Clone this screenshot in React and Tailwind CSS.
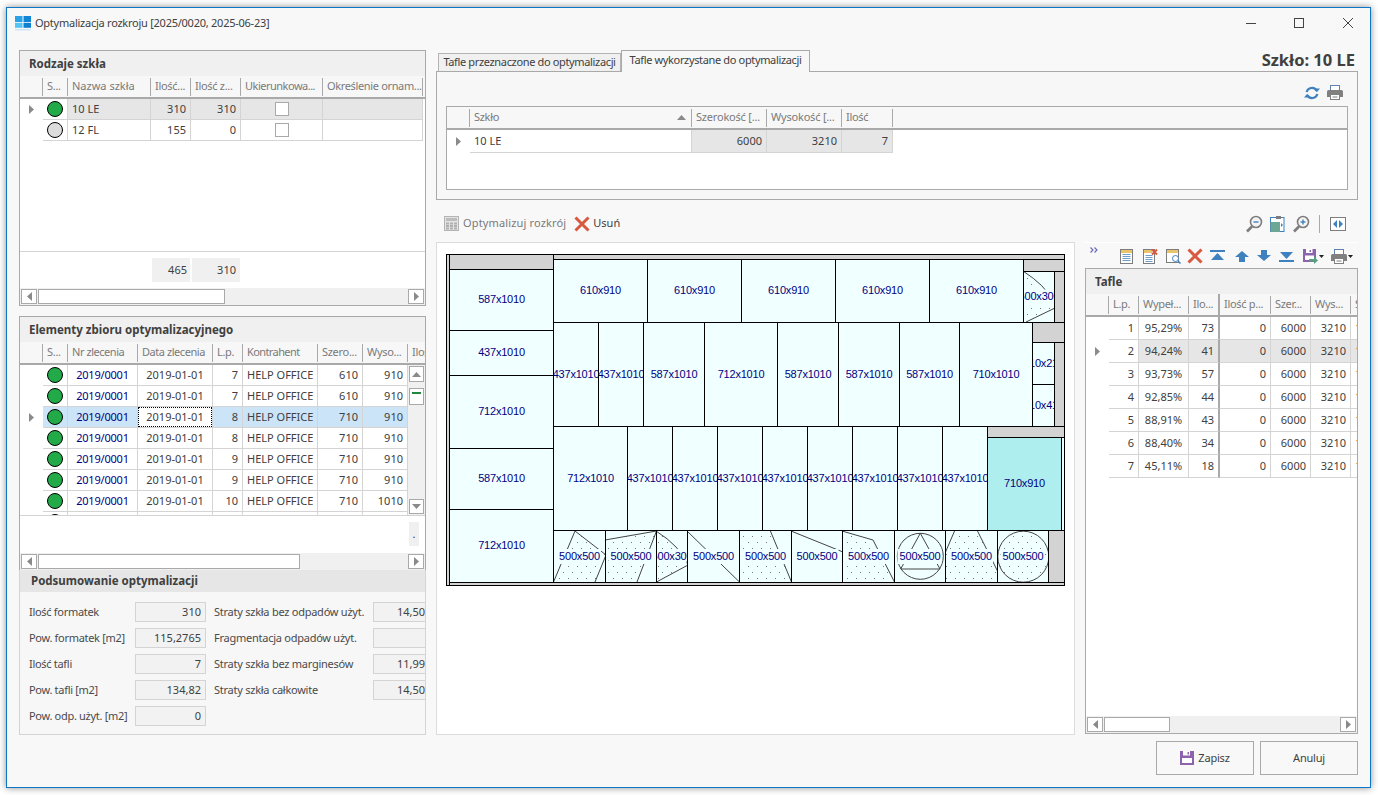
import React from 'react';

const Tri = ({ dir = 'r', c = '#8a8a8a' }) => {
  const d = { r: 'M0 0L5 4.5L0 9z', l: 'M5 0L0 4.5L5 9z', u: 'M0 5L4.5 0L9 5z', d: 'M0 0L4.5 5L9 0z' }[dir];
  const vert = dir === 'u' || dir === 'd';
  return <svg width={vert ? 9 : 5} height={vert ? 5 : 9}><path d={d} fill={c} /></svg>;
};

const Dot = ({ c = '#21aa47' }) => (
  <div className="h-[16px] w-[16px] rounded-full border border-black" style={{ backgroundColor: c }} />
);

const Check = () => <div className="h-[14px] w-[14px] border border-[#a9a9a9] bg-white" />;

const HeaderRow = ({ cols }) => (
  <div className="flex h-[23px] shrink-0 items-center overflow-hidden border-b-2 border-[#a9a9a9] bg-[#f7f7f7] text-[#7a7a7a]">
    {cols.map((c, i) => (
      <div key={i} className={`flex shrink-0 items-center justify-between overflow-hidden whitespace-nowrap pl-[4px] ${c.w} ${c.noSep ? '' : 'border-r border-[#a9a9a9]'} ${c.head || 'h-[18px]'} ${c.tr || 'tracking-[-0.3px]'}`}>
        <span>{c.t}</span>
        {c.sort && <span className="mr-[5px] flex"><Tri dir="u" /></span>}
      </div>
    ))}
  </div>
);

const Row = ({ cols, vals, h, cellBg, arrow }) => (
  <div className={`flex shrink-0 text-[#404040] ${h}`}>
    {cols.map((c, i) => {
      if (i === 0) {
        return (
          <div key={i} className={`flex shrink-0 items-center justify-start bg-white pl-[9px] ${c.w}`}>
            {arrow && <Tri />}
          </div>
        );
      }
      return (
        <div key={i} className={`flex shrink-0 items-center overflow-hidden whitespace-nowrap border-b border-r border-[#d4d4d4] px-[4px] ${c.w} ${c.cell || ''} ${cellBg ? cellBg(i) : 'bg-white'}`}>
          {vals[i]}
        </div>
      );
    })}
  </div>
);

const HScroll = ({ thumb }) => (
  <div className="flex h-[17px] shrink-0 items-center gap-[1px] bg-[#f0f0f0] pl-[1px] pr-[1px]">
    <div className="flex h-[15px] w-[16px] shrink-0 items-center justify-center border border-[#a9a9a9] bg-white"><Tri dir="l" /></div>
    <div className={`h-[15px] shrink-0 border border-[#a9a9a9] bg-white ${thumb}`} />
    <div className="flex-1" />
    <div className="flex h-[15px] w-[16px] shrink-0 items-center justify-center border border-[#a9a9a9] bg-white"><Tri dir="r" /></div>
  </div>
);

const PanelTitle = ({ children }) => (
  <div className="flex h-[25px] shrink-0 items-center bg-[#f0f0f0] pl-[9px] text-[11.5px] font-bold text-[#404040]">{children}</div>
);

/* ---------- Rodzaje szkła ---------- */
const rodzajeCols = [
  { w: 'w-[23px]' },
  { w: 'w-[25px]', t: 'S...', cell: 'justify-center !px-0' },
  { w: 'w-[83px]', t: 'Nazwa szkła', tr: 'tracking-normal' },
  { w: 'w-[40px]', t: 'Ilość...', cell: 'justify-end' },
  { w: 'w-[50px]', t: 'Ilość z...', cell: 'justify-end' },
  { w: 'w-[82px]', t: 'Ukierunkowa...', cell: 'justify-center', tr: 'tracking-[-0.5px]' },
  { w: 'w-[100px]', t: 'Określenie ornam...', tr: 'tracking-[-0.35px]' },
];

const RodzajePanel = () => (
  <div className="flex h-[256px] shrink-0 flex-col border border-[#a9a9a9] bg-white">
    <PanelTitle>Rodzaje szkła</PanelTitle>
    <HeaderRow cols={rodzajeCols} />
    <div className="flex flex-1 flex-col overflow-hidden">
      <Row cols={rodzajeCols} h="h-[21px]" arrow vals={[null, <Dot />, '10 LE', '310', '310', <Check />, '']} cellBg={(i) => (i === 1 ? 'bg-white' : 'bg-[#e6e6e6]')} />
      <Row cols={rodzajeCols} h="h-[21px]" vals={[null, <Dot c="#dcdcdc" />, '12 FL', '155', '0', <Check />, '']} />
    </div>
    <div className="flex h-[37px] shrink-0 items-start border-t border-[#d4d4d4] bg-white pl-[132px] pt-[6px] text-[#404040]">
      <div className="flex h-[24px] w-[38px] items-center justify-end bg-[#f0f0f0] pr-[3px]">465</div>
      <div className="ml-[2px] flex h-[24px] w-[48px] items-center justify-end bg-[#f0f0f0] pr-[4px]">310</div>
    </div>
    <HScroll thumb="w-[187px]" />
  </div>
);

/* ---------- Elementy ---------- */
const elemCols = [
  { w: 'w-[23px]' },
  { w: 'w-[25px]', t: 'S...', cell: 'justify-center !px-0' },
  { w: 'w-[70px]', t: 'Nr zlecenia', cell: 'justify-center text-[#00007f] tracking-[-0.2px]', tr: 'tracking-[-0.45px]' },
  { w: 'w-[75px]', t: 'Data zlecenia', cell: 'justify-center', tr: 'tracking-[-0.45px]' },
  { w: 'w-[30px]', t: 'L.p.', cell: 'justify-end' },
  { w: 'w-[75px]', t: 'Kontrahent', tr: 'tracking-[-0.6px]' },
  { w: 'w-[45px]', t: 'Szero...', cell: 'justify-end' },
  { w: 'w-[45px]', t: 'Wyso...', cell: 'justify-end' },
  { w: 'w-[17px]', t: 'Ilość', noSep: true },
];
const elemBodyCols = elemCols.slice(0, 8);
const elemRows = [
  ['7', '610', '910'], ['7', '610', '910'], ['8', '710', '910'], ['8', '710', '910'],
  ['9', '710', '910'], ['9', '710', '910'], ['10', '710', '1010'], ['10', '710', '1010'],
];

const ElementyPanel = () => (
  <div className="mt-[10px] flex h-[254px] shrink-0 flex-col border border-b-0 border-[#a9a9a9] bg-white">
    <PanelTitle>Elementy zbioru optymalizacyjnego</PanelTitle>
    <HeaderRow cols={elemCols} />
    <div className="flex h-[150px] shrink-0 overflow-hidden">
      <div className="flex w-[388px] shrink-0 flex-col">
        {elemRows.map((r, i) => (
          <Row
            key={i}
            cols={elemBodyCols}
            h="h-[21px]"
            arrow={i === 2}
            vals={[null, <Dot />, '2019/0001',
              i === 2 ? <div className="flex h-[20px] w-[75px] items-center justify-center border border-dotted border-black bg-white">2019-01-01</div> : '2019-01-01',
              r[0], 'HELP OFFICE', r[1], r[2]]}
            cellBg={(c) => (i === 2 ? (c === 3 ? 'bg-white !px-0' : 'bg-[#cce4f7]') : 'bg-white')}
          />
        ))}
      </div>
      <div className="flex w-[17px] shrink-0 flex-col items-center bg-[#f0f0f0] pt-[1px]">
        <div className="flex h-[16px] w-[15px] shrink-0 items-center justify-center border border-[#a9a9a9] bg-white"><Tri dir="u" /></div>
        <div className="mt-[6px] h-[17px] w-[15px] shrink-0 border border-[#a9a9a9] bg-white pl-[2px] pt-[3px]"><div className="h-[2px] w-[9px] bg-[#21893f]" /></div>
        <div className="flex-1" />
        <div className="mb-[1px] flex h-[15px] w-[15px] shrink-0 items-center justify-center border border-[#a9a9a9] bg-white"><Tri dir="d" /></div>
      </div>
    </div>
    <div className="flex h-[38px] shrink-0 border-t border-[#d4d4d4] bg-white pl-[389px] pt-[6px]">
      <div className="flex h-[24px] w-[10px] items-center justify-center bg-[#f0f0f0] text-[#404040]">.</div>
    </div>
    <HScroll thumb="w-[262px]" />
  </div>
);

/* ---------- Podsumowanie ---------- */
const Inp = ({ v, w, open }) => (
  <div className={`flex h-[20px] shrink-0 items-center justify-end border border-[#d4d4d4] bg-[#f2f2f2] text-[#404040] ${w} ${open ? 'border-r-0 pr-0' : 'pr-[4px]'}`}>{v}</div>
);

const sumRows = [
  ['Ilość formatek', '310', 'Straty szkła bez odpadów użyt.', '14,50'],
  ['Pow. formatek [m2]', '115,2765', 'Fragmentacja odpadów użyt.', ''],
  ['Ilość tafli', '7', 'Straty szkła bez marginesów', '11,99'],
  ['Pow. tafli [m2]', '134,82', 'Straty szkła całkowite', '14,50'],
  ['Pow. odp. użyt. [m2]', '0', null, null],
];

const PodsumowaniePanel = () => (
  <div className="flex h-[165px] shrink-0 flex-col border border-t-0 border-[#d4d4d4] bg-[#f7f7f7]">
    <div className="flex h-[22px] shrink-0 items-center bg-[#e6e6e6] pl-[11px] text-[11.5px] font-bold text-[#404040]">Podsumowanie optymalizacji</div>
    <div className="flex flex-col gap-[6px] pl-[9px] pt-[10px] text-[#4a4a4a]">
      {sumRows.map((r, i) => (
        <div key={i} className="flex h-[20px] items-center">
          <div className="w-[106px] shrink-0 whitespace-nowrap tracking-[-0.3px]">{r[0]}</div>
          <Inp v={r[1]} w="w-[71px]" />
          {r[2] && <div className="ml-[8px] w-[159px] shrink-0 whitespace-nowrap tracking-[-0.25px]">{r[2]}</div>}
          {r[2] && <Inp v={r[3]} w="w-[52px]" open />}
        </div>
      ))}
    </div>
  </div>
);

/* ---------- Icons ---------- */
const RefreshIcon = () => (
  <svg width="16" height="14" viewBox="0 0 16 14" fill="none">
    <path d="M2.6 6A5.5 5.5 0 0 1 12.6 4.6" stroke="#3f80bf" strokeWidth="2.2" />
    <path d="M13.4 8A5.5 5.5 0 0 1 3.4 9.4" stroke="#3f80bf" strokeWidth="2.2" />
    <path d="M10 6.2H16L13.2 2.6z" fill="#3f80bf" transform="rotate(180 13 4.4)" />
    <path d="M0 7.8H6L2.8 11.4z" fill="#3f80bf" transform="rotate(180 3 9.6)" />
  </svg>
);
const PrinterIcon = ({ w = 16, h = 15 }) => (
  <svg width={w} height={h} viewBox="0 0 16 15">
    <rect x="3.5" y="0.5" width="9" height="5" fill="#fff" stroke="#5d84ad" />
    <path d="M0 6.5Q0 5 1.5 5H14.5Q16 5 16 6.5V12H0z" fill="#808080" />
    <rect x="3.5" y="9.5" width="9" height="5" fill="#fff" stroke="#808080" />
    <path d="M5.5 12h5" stroke="#808080" />
  </svg>
);
const Mag = ({ plus }) => (
  <svg width="18" height="18" viewBox="0 0 18 18" fill="none">
    <circle cx="11" cy="7" r="5.5" stroke="#7d7d7d" strokeWidth="1.6" fill="#f4f4f4" />
    <path d="M7 11.5L2 16.5" stroke="#7d7d7d" strokeWidth="2.6" />
    <path d="M8.5 7h5" stroke="#3f80bf" strokeWidth="1.4" />
    {plus && <path d="M11 4.5v5" stroke="#3f80bf" strokeWidth="1.4" />}
  </svg>
);
const FitIcon = () => (
  <svg width="15" height="16" viewBox="0 0 15 16">
    <rect x="0.5" y="1.5" width="13.5" height="14" fill="#fff" stroke="#3f80bf" />
    <rect x="0.5" y="6" width="9.5" height="10" fill="#6ea695" />
    <rect x="6" y="0" width="5" height="3" fill="#7d7d7d" />
    <path d="M11 7l2 2-2 2z" fill="#3f80bf" />
  </svg>
);
const SplitIcon = () => (
  <svg width="16" height="14" viewBox="0 0 16 14">
    <rect x="0.5" y="0.5" width="15" height="13" fill="#fff" stroke="#7d7d7d" />
    <path d="M7 3v8L3 7zM9 3v8l4-4z" fill="#3f80bf" />
  </svg>
);
const CalcIcon = () => (
  <svg width="15" height="15" viewBox="0 0 15 15">
    <rect x="0.5" y="0.5" width="14" height="14" fill="#e4e4e4" stroke="#b4b4b4" />
    <rect x="2" y="2" width="11" height="3" fill="#bdbdbd" />
    {[2, 6, 10].map((x) => [6.5, 9, 11.5].map((y) => <rect key={`${x}${y}`} x={x} y={y} width="3" height="2" fill="#b0b0b0" />))}
  </svg>
);
const XIcon = () => (
  <svg width="16" height="16" viewBox="0 0 16 16"><path d="M1.5 1.5L14.5 14.5M14.5 1.5L1.5 14.5" stroke="#d8593f" strokeWidth="3" /></svg>
);
const DocIcon = () => (
  <svg width="13" height="15" viewBox="0 0 13 15">
    <rect x="0.5" y="0.5" width="12" height="14" fill="#fff" stroke="#7d7d7d" />
    <rect x="1" y="1" width="11" height="3" fill="#e9c46a" />
    <path d="M2.5 5.5h8M2.5 7.5h8M2.5 9.5h8M2.5 11.5h8" stroke="#6d9fcc" />
  </svg>
);
const DocXIcon = () => (
  <svg width="15" height="15" viewBox="0 0 15 15">
    <rect x="0.5" y="0.5" width="11" height="14" fill="#fff" stroke="#7d7d7d" />
    <rect x="1" y="1" width="8" height="3" fill="#e9c46a" />
    <path d="M2.5 6.5h7M2.5 8.5h7M2.5 10.5h7M2.5 12.5h7" stroke="#6d9fcc" />
    <path d="M9 0.5l5 5M14 0.5l-5 5" stroke="#d8593f" strokeWidth="2" />
  </svg>
);
const DocSearchIcon = () => (
  <svg width="15" height="15" viewBox="0 0 15 15">
    <rect x="0.5" y="0.5" width="12" height="13" fill="#fff" stroke="#7d7d7d" />
    <rect x="1" y="1" width="11" height="3" fill="#e9c46a" />
    <circle cx="9.5" cy="9.5" r="3" fill="#fff" stroke="#3f80bf" />
    <path d="M12 12l2.5 2.5" stroke="#3f80bf" strokeWidth="1.5" />
  </svg>
);
const ArrowIcon = ({ kind }) => {
  const c = '#3f80bf';
  const w = kind === 'up' || kind === 'down' ? 14 : 15;
  return (
    <svg width={w} height="12" viewBox={`0 0 ${w} 12`}>
      {kind === 'first' && <><rect x="0" y="0" width="15" height="2" fill={c} /><path d="M7.5 3L14 10H1z" fill={c} /></>}
      {kind === 'last' && <><rect x="0" y="10" width="15" height="2" fill={c} /><path d="M7.5 9L14 2H1z" fill={c} /></>}
      {kind === 'up' && <path d="M7 1L14 7H10V12H4V7H0z" fill={c} />}
      {kind === 'down' && <path d="M7 11L14 5H10V0H4V5H0z" fill={c} />}
    </svg>
  );
};
const SaveIcon = ({ s = 14 }) => (
  <svg width={s} height={s} viewBox="0 0 14 14">
    <path d="M0 0H14V14H0z" fill="#8e63ad" />
    <rect x="3" y="0" width="7" height="4.5" fill="#fff" />
    <rect x="7.5" y="1" width="1.5" height="2.5" fill="#8e63ad" />
    <rect x="2" y="7" width="10" height="5" fill="#fff" />
  </svg>
);
const SaveAsIcon = () => (
  <svg width="15" height="15" viewBox="0 0 15 15">
    <path d="M0 0H13V13H0z" fill="#8e63ad" />
    <rect x="3" y="0" width="6.5" height="4" fill="#fff" />
    <rect x="6.5" y="1" width="1.5" height="2" fill="#8e63ad" />
    <rect x="2" y="6.5" width="9" height="4.5" fill="#fff" />
    <path d="M6 10h5V7.5l4 4-4 3.5V12.5H6z" fill="#5b9f83" />
  </svg>
);
const Chevrons = () => (
  <svg width="8" height="6" viewBox="0 0 8 6" fill="none">
    <path d="M0.5 0.5L3 3L0.5 5.5M4.5 0.5L7 3L4.5 5.5" stroke="#6b6bb5" strokeWidth="1.2" />
  </svg>
);
const DropTri = () => (
  <svg width="5" height="3" viewBox="0 0 5 3" className="ml-[1px]"><path d="M0 0H5L2.5 3z" fill="#222" /></svg>
);

/* ---------- Tafle used ---------- */
const szkloCols = [
  { w: 'w-[23px]' },
  { w: 'w-[222px]', t: 'Szkło', sort: true },
  { w: 'w-[75px]', t: 'Szerokość [...', cell: 'justify-end', tr: 'tracking-[-0.2px]' },
  { w: 'w-[75px]', t: 'Wysokość [...', cell: 'justify-end', tr: 'tracking-[-0.2px]' },
  { w: 'w-[51px]', t: 'Ilość', cell: 'justify-end' },
];

const TabsArea = () => (
  <>
    <div className="flex h-[21px] shrink-0 items-end">
      <div className="ml-[2px] flex h-[18px] w-[183px] items-center justify-center whitespace-nowrap border border-b-0 border-[#b4b4b4] bg-[#f0f0f0] tracking-[-0.35px] text-[#404040]">Tafle przeznaczone do optymalizacji</div>
      <div className="relative z-10 -mb-px flex h-[22px] w-[189px] items-center justify-center whitespace-nowrap border border-b-0 border-[#a9a9a9] bg-[#f7f7f7] pb-[2px] tracking-[-0.35px] text-[#404040]">Tafle wykorzystane do optymalizacji</div>
      <div className="ml-auto pb-[3px] pr-[3px] text-[16.5px] font-bold leading-none text-[#404040]">Szkło: 10 LE</div>
    </div>
    <div className="flex h-[129px] shrink-0 flex-col border border-[#a9a9a9] bg-[#f7f7f7]">
      <div className="flex h-[34px] shrink-0 items-center justify-end gap-[7px] pr-[14px] pt-[7px]">
        <RefreshIcon />
        <PrinterIcon />
      </div>
      <div className="mx-[9px] flex h-[84px] shrink-0 flex-col border border-[#a9a9a9] bg-white">
        <HeaderRow cols={szkloCols} />
        <Row cols={szkloCols} h="h-[23px]" arrow vals={[null, '10 LE', '6000', '3210', '7']} cellBg={(i) => (i === 1 ? 'bg-white' : 'bg-[#e6e6e6]')} />
      </div>
    </div>
  </>
);

/* ---------- Cutting diagram ---------- */
const cols1 = [[269, 330, '587x1010'], [330, 375, '437x1010'], [375, 448, '712x1010'], [448, 509, '587x1010'], [509, 582, '712x1010']];
const rowA = [553, 647, 741, 835, 929, 1023];
const rowB = [553, 598, 643, 704, 777, 838, 899, 959, 1032];
const rowBt = ['437x1010', '437x1010', '587x1010', '712x1010', '587x1010', '587x1010', '587x1010', '710x1010'];
const rowC = [553, 627, 672, 717, 762, 807, 852, 897, 942, 987];
const rowCt = ['712x1010', '437x1010', '437x1010', '437x1010', '437x1010', '437x1010', '437x1010', '437x1010', '437x1010'];
const rowD = [553, 605, 656, 687, 739, 791, 842, 894, 945, 997, 1048];

const Cell = ({ x0, y0, x1, y1, t, fill = '#f0ffff', extra, tw = 50 }) => {
  const w = x1 - x0;
  const h = y1 - y0;
  return (
    <g>
      <rect x={x0 + 0.5} y={y0 + 0.5} width={w} height={h} fill={fill} stroke="#000" />
      <svg x={x0 + 1} y={y0 + 1} width={w - 1} height={h - 1} viewBox={`${x0 + 1} ${y0 + 1} ${w - 1} ${h - 1}`}>
        {extra}
        {t && extra && <rect x={(x0 + x1) / 2 - tw / 2} y={(y0 + y1) / 2 - 7} width={tw} height={15} fill={fill} />}
        {t && (
          <text x={(x0 + x1) / 2 + 0.5} y={(y0 + y1) / 2 + 3.5} textAnchor="middle" fontSize="11" letterSpacing="-0.2" fill="#00007f" fontFamily="'Liberation Sans', sans-serif">{t}</text>
        )}
      </svg>
    </g>
  );
};

const ln = '#444';
const L = ({ d, fillDots }) => (
  <>
    {fillDots && <path d={fillDots} fill="url(#dots)" />}
    <path d={d} fill="none" stroke={ln} strokeWidth="1" />
  </>
);

const shapes = [
  <L fillDots="M553 582L575 531L606 555L595 582z" d="M553.5 582L575 531L606 555L595 582" />,
  <L fillDots="M605 540L656 531L637 582L605 582z" d="M605 540L656.5 531L637 582" />,
  <L fillDots="M656 531Q680 546 688 565L656 582z" d="M656 531Q680 546 688 565L656.5 582" />,
  <L d="M687 531L739.5 582" />,
  <L fillDots="M739 530L770 530L791 582L739 582z" d="M770 530L791.5 582" />,
  <L d="M791 531L843 552" />,
  <L fillDots="M842 531L873 540L894 582L842 582z" d="M842 531L873 540L894.5 582" />,
  <>
    <circle cx="920.3" cy="556.3" r="23" fill="none" stroke={ln} />
    <path d="M920.3 533.3L900.7 569H940L920.3 533.3" fill="none" stroke={ln} />
  </>,
  <L fillDots="M945 552L955 530L977 530L997 571L997 582L945 582z" d="M945.5 552L955 530M977 530L997.5 571" />,
  <circle cx="1023.3" cy="556.7" r="25.5" fill="url(#dots)" stroke={ln} />,
];
const rowDt = ['500x500', '500x500', '500x300', '500x500', '500x500', '500x500', '500x500', '500x500', '500x500', '500x500'];

const Diagram = () => (
  <svg width="620" height="332" viewBox="446 254 620 332" className="block">
    <defs>
      <pattern id="dots" x="0" y="0" width="9" height="12" patternUnits="userSpaceOnUse">
        <rect x="1" y="2" width="1" height="1" fill="#777" />
        <rect x="5" y="8" width="1" height="1" fill="#777" />
      </pattern>
    </defs>
    <rect x="446.5" y="254.5" width="618" height="331" fill="#d3d3d3" stroke="#000" />
    <path d="M449.5 254v331M449 582.5h615" stroke="#000" fill="none" />
    <path d="M553.5 259v-5" stroke="#000" />
    <path d="M449.5 269.5h104" stroke="#000" />
    {cols1.map((c, i) => <Cell key={i} x0={449} x1={553} y0={c[0]} y1={c[1]} t={c[2]} />)}
    {rowA.slice(0, -1).map((x, i) => <Cell key={i} x0={x} x1={rowA[i + 1]} y0={259} y1={322} t="610x910" />)}
    <rect x="1023.5" y="259.5" width="41" height="12" fill="#d3d3d3" stroke="#000" />
    <Cell x0={1023} x1={1054} y0={271} y1={322} t="500x300" tw={32}
      extra={<L fillDots="M1023 271Q1046 286 1055 308L1026 322H1023z" d="M1023 271Q1046 286 1052 300M1055 308L1026 322" />} />
    {rowB.slice(0, -1).map((x, i) => <Cell key={i} x0={x} x1={rowB[i + 1]} y0={322} y1={426} t={rowBt[i]} />)}
    <rect x="1032.5" y="322.5" width="32" height="20" fill="#d3d3d3" stroke="#000" />
    <Cell x0={1032} x1={1054} y0={342} y1={384} t="710x210" />
    <Cell x0={1032} x1={1054} y0={384} y1={426} t="710x410" />
    {rowC.slice(0, -1).map((x, i) => <Cell key={i} x0={x} x1={rowC[i + 1]} y0={426} y1={530} t={rowCt[i]} />)}
    <rect x="987.5" y="426.5" width="77" height="11" fill="#d3d3d3" stroke="#000" />
    <Cell x0={987} x1={1061} y0={437} y1={530} t="710x910" fill="#afeeee" />
    <rect x="1061.5" y="437.5" width="3" height="93" fill="#f0ffff" stroke="#000" />
    {rowD.slice(0, -1).map((x, i) => (
      <Cell key={i} x0={x} x1={rowD[i + 1]} y0={530} y1={582} t={rowDt[i]} extra={shapes[i]} tw={i === 2 ? 30 : 44} />
    ))}
    <path d="M1048.5 530v52M553.5 259v323" stroke="#000" fill="none" />
  </svg>
);

/* ---------- Tafle ---------- */
const tafleCols = [
  { w: 'w-[23px]' },
  { w: 'w-[30px]', t: 'L.p.', cell: 'justify-end' },
  { w: 'w-[50px]', t: 'Wypeł...', cell: 'justify-center' },
  { w: 'w-[31px]', t: 'Ilo...', cell: 'justify-end !border-r-2 !border-r-[#a9a9a9]', head: 'h-[22px] !border-r-2' },
  { w: 'w-[51px]', t: 'Ilość p...', cell: 'justify-end' },
  { w: 'w-[40px]', t: 'Szer...', cell: 'justify-end' },
  { w: 'w-[40px]', t: 'Wys...', cell: 'justify-end' },
  { w: 'w-[7px]', t: 'S', noSep: true, cell: 'text-[#d08b2c] !border-r-0' },
];
const tafleRows = [
  ['1', '95,29%', '73'], ['2', '94,24%', '41'], ['3', '93,73%', '57'], ['4', '92,85%', '44'],
  ['5', '88,91%', '43'], ['6', '88,40%', '34'], ['7', '45,11%', '18'],
];

const TaflePanel = () => (
  <div className="flex h-[466px] shrink-0 flex-col border border-[#a9a9a9] bg-white">
    <PanelTitle>Tafle</PanelTitle>
    <HeaderRow cols={tafleCols} />
    <div className="flex flex-1 flex-col overflow-hidden">
      {tafleRows.map((r, i) => (
        <Row key={i} cols={tafleCols} h="h-[23px]" arrow={i === 1} vals={[null, r[0], r[1], r[2], '0', '6000', '3210', '1']}
          cellBg={(c) => (i === 1 && c > 1 ? 'bg-[#e6e6e6]' : 'bg-white')} />
      ))}
    </div>
    <HScroll thumb="w-[66px]" />
  </div>
);

const TafleToolbar = () => (
  <div className="flex h-[26px] shrink-0 items-start border-t border-[#ffffff]">
    <span className="ml-[5px] mt-[4px] flex"><Chevrons /></span>
    <div className="ml-[22px] mt-[5px] flex items-center">
      <DocIcon />
      <span className="ml-[10px] flex"><DocXIcon /></span>
      <span className="ml-[8px] flex"><DocSearchIcon /></span>
      <span className="ml-[6px] flex"><XIcon /></span>
      <span className="ml-[7px] flex"><ArrowIcon kind="first" /></span>
      <span className="ml-[10px] flex"><ArrowIcon kind="up" /></span>
      <span className="ml-[8px] flex"><ArrowIcon kind="down" /></span>
      <span className="ml-[8px] flex"><ArrowIcon kind="last" /></span>
      <span className="ml-[9px] flex"><SaveAsIcon /></span>
      <DropTri />
      <span className="ml-[7px] flex"><PrinterIcon /></span>
      <DropTri />
    </div>
  </div>
);

/* ---------- App ---------- */
const Logo = () => (
  <svg width="16" height="15" viewBox="0 0 16 15">
    <rect x="0" y="0" width="7.5" height="6" fill="#2aa3e6" />
    <rect x="8.5" y="0" width="7.5" height="6" fill="#1186d6" />
    <rect x="0" y="6.8" width="7.5" height="5" fill="#54c5f2" />
    <rect x="8.5" y="6.8" width="7.5" height="5" fill="#0f7fd0" />
    <rect x="0" y="13" width="16" height="1.5" fill="#cfe6f5" />
  </svg>
);

export default function App() {
  return (
    <div className="h-[795px] w-[1378px] overflow-hidden bg-white pl-[6px] pt-[7px] font-['Noto_Sans',sans-serif] text-[11px]">
      <div className="flex h-[781px] w-[1365px] flex-col border border-[#0f76c6] bg-[#f8f8f8] shadow-[0_0_7px_rgba(0,0,0,0.45)]">
        <div className="flex h-[30px] shrink-0 items-center pl-[8px]">
          <Logo />
          <span className="ml-[4px] text-[11px] tracking-[-0.25px] text-[#404040]">Optymalizacja rozkroju [2025/0020, 2025-06-23]</span>
          <div className="ml-auto flex items-center">
            <svg width="48" height="16" viewBox="0 0 48 16"><path d="M1 8.5H11" stroke="#444" /></svg>
            <svg width="48" height="16" viewBox="0 0 48 16"><rect x="1.5" y="3.5" width="9" height="9" fill="none" stroke="#444" /></svg>
            <svg width="29" height="16" viewBox="0 0 29 16"><path d="M2 3L12 13M12 3L2 13" stroke="#444" /></svg>
          </div>
        </div>
        <div className="mt-[12px] flex flex-1">
          <div className="ml-[12px] flex w-[407px] shrink-0 flex-col">
            <RodzajePanel />
            <ElementyPanel />
            <PodsumowaniePanel />
          </div>
          <div className="ml-[10px] flex w-[922px] shrink-0 flex-col">
            <TabsArea />
            <div className="flex h-[42px] shrink-0 items-center pt-[5px] text-[#404040]">
              <span className="ml-[8px] flex"><CalcIcon /></span>
              <span className="ml-[4px] tracking-[0.15px] text-[#7a7a7a]">Optymalizuj rozkrój</span>
              <span className="ml-[8px] flex"><XIcon /></span>
              <span className="ml-[3px]">Usuń</span>
              <div className="ml-auto flex items-center pr-[12px]">
                <Mag />
                <span className="ml-[7px] flex"><FitIcon /></span>
                <span className="ml-[7px] flex"><Mag plus /></span>
                <div className="ml-[9px] h-[18px] w-px bg-[#a9a9a9]" />
                <span className="ml-[10px] flex"><SplitIcon /></span>
              </div>
            </div>
            <div className="flex">
              <div className="h-[493px] w-[639px] shrink-0 border border-[#dcdcdc] bg-white pl-[9px] pt-[11px]">
                <Diagram />
              </div>
              <div className="ml-[10px] flex w-[273px] shrink-0 flex-col">
                <TafleToolbar />
                <TaflePanel />
              </div>
            </div>
            <div className="mt-[6px] flex justify-end gap-[6px] tracking-[-0.2px]">
              <button className="flex h-[34px] w-[98px] items-center justify-center border border-[#a9a9a9] bg-[#f8f8f8] text-[#404040]">
                <SaveIcon /><span className="ml-[4px]">Zapisz</span>
              </button>
              <button className="flex h-[34px] w-[98px] items-center justify-center border border-[#a9a9a9] bg-[#f8f8f8] text-[#404040]">Anuluj</button>
            </div>
          </div>
        </div>
      </div>
    </div>
  );
}
